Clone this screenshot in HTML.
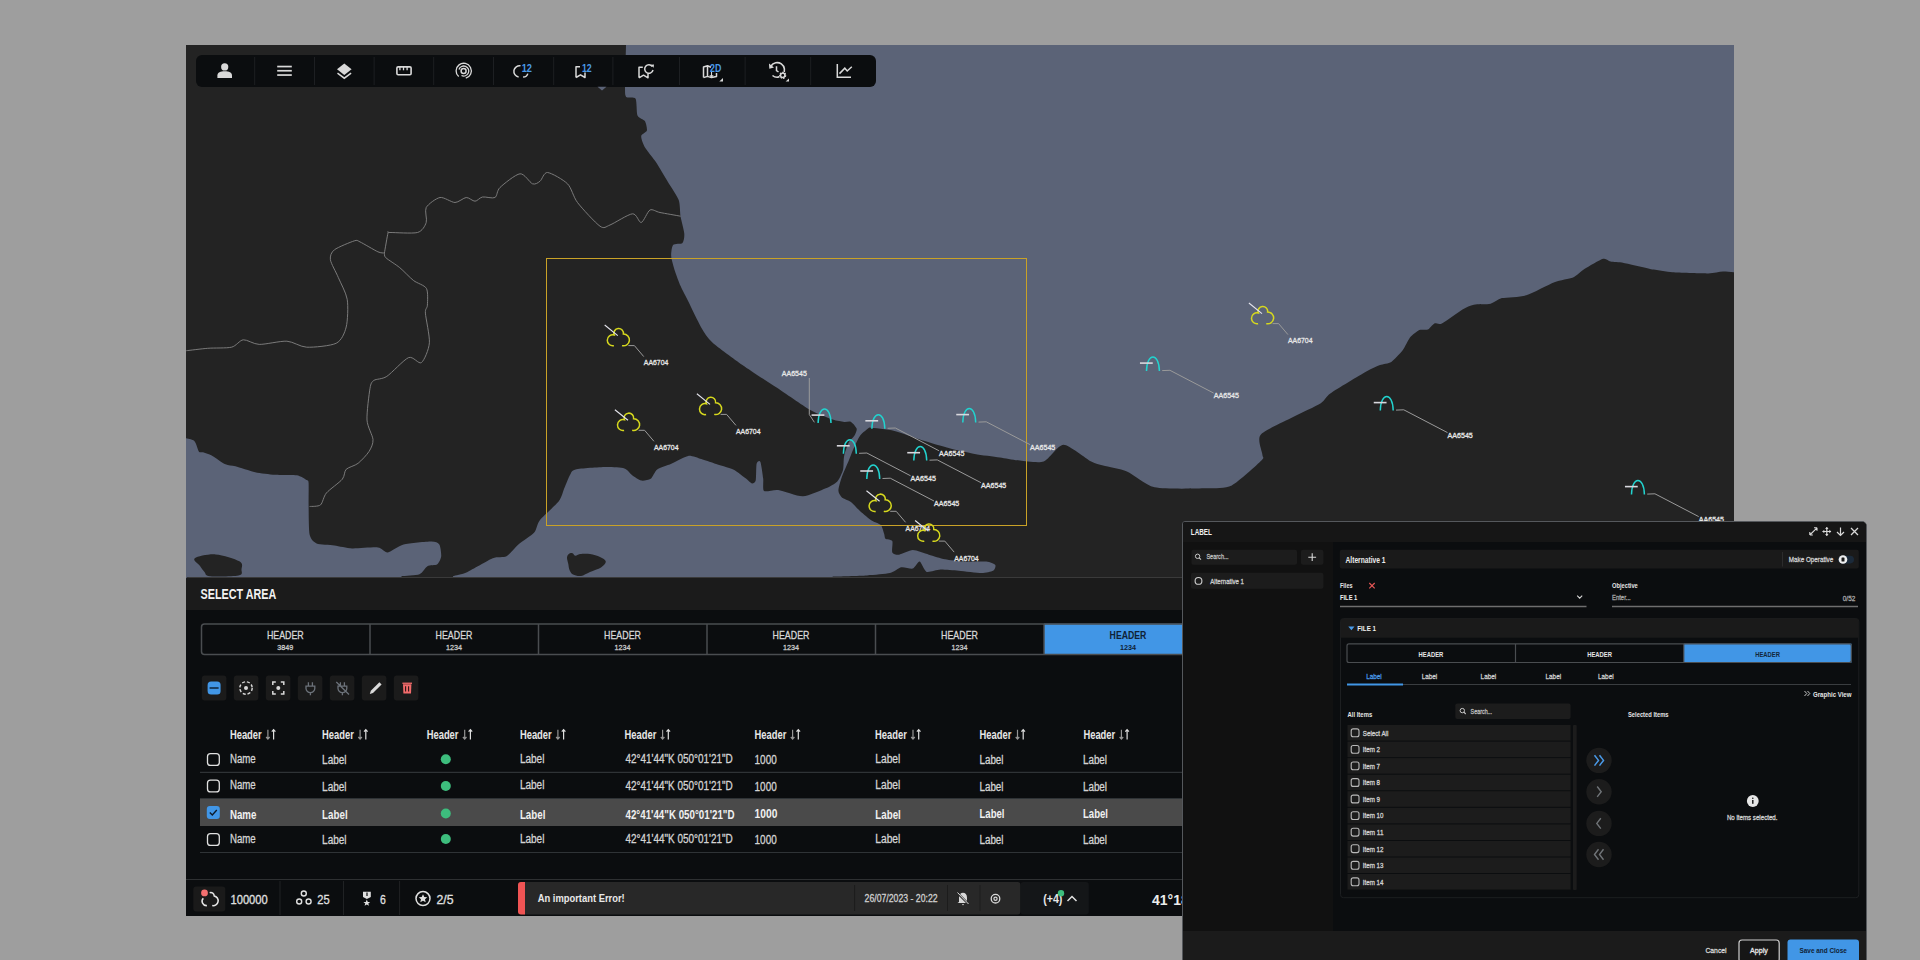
<!DOCTYPE html>
<html><head><meta charset="utf-8">
<style>
*{box-sizing:border-box;margin:0;padding:0}
html,body{width:1920px;height:960px;overflow:hidden;background:#9e9e9e;font-family:"Liberation Sans",sans-serif;position:relative}
svg{position:absolute;left:0;top:0;overflow:hidden}
text{font-family:"Liberation Sans",sans-serif}
</style></head><body>
<svg width="1920" height="960" viewBox="0 0 1920 960" style="position:absolute;left:0;top:0">
<defs><clipPath id="mc"><rect x="186" y="45" width="1548" height="535"/></clipPath></defs>
<g clip-path="url(#mc)">
<rect x="186" y="45" width="1548" height="535" fill="#5b6377"/>
<path fill="#232323" d="M180.0,40.0 L626.0,40.0 L626.0,45.0 C625.9,49.9 625.0,80.9 625.0,87.0 C625.0,93.1 625.0,95.5 626.2,96.9 C627.4,98.3 634.3,96.5 635.6,98.7 C636.9,100.9 636.4,113.0 637.5,115.6 C638.6,118.2 643.9,119.5 645.0,121.2 C646.1,123.0 647.3,128.8 646.9,130.6 C646.5,132.3 641.4,134.2 641.2,136.2 C641.0,138.2 643.2,144.4 645.0,147.5 C646.8,150.6 653.6,158.6 656.2,162.5 C658.8,166.4 664.9,176.8 667.5,181.2 C670.1,185.6 677.2,195.8 678.7,200.0 C680.2,204.2 679.9,212.9 680.6,216.8 C681.3,220.7 684.1,230.6 684.3,233.7 C684.5,236.8 683.8,241.7 682.5,243.0 C681.2,244.3 674.4,243.4 673.1,244.9 C671.8,246.4 671.0,253.1 671.2,256.2 C671.4,259.3 673.9,267.7 675.0,271.2 C676.1,274.7 679.1,282.6 680.6,286.1 C682.1,289.6 685.7,296.3 688.1,301.1 C690.5,305.9 698.4,322.6 701.2,327.4 C704.0,332.2 707.6,338.0 712.4,342.4 C717.2,346.8 735.0,359.7 742.4,364.9 C749.8,370.1 768.3,382.1 776.2,387.3 C784.1,392.5 803.3,406.0 809.9,409.8 C816.5,413.6 828.7,418.2 832.7,419.6 C836.7,421.0 842.0,421.6 844.1,421.9 C846.2,422.2 849.5,421.1 851.0,421.9 C852.5,422.7 856.3,427.1 856.7,428.7 C857.1,430.3 855.4,434.0 854.5,435.6 C853.6,437.2 849.9,440.1 848.7,442.5 C847.5,444.9 844.8,453.0 844.1,456.2 C843.4,459.4 843.8,467.1 843.0,470.0 C842.2,472.9 839.3,479.3 837.3,481.4 C835.3,483.5 829.8,486.6 825.8,488.3 C821.8,490.0 808.5,496.1 802.9,496.3 C797.3,496.5 782.7,490.6 778.2,490.0 C773.7,489.4 765.9,492.3 764.1,491.0 C762.4,489.7 763.6,482.2 763.2,478.8 C762.8,475.4 761.2,463.6 760.4,461.9 C759.6,460.1 757.1,461.6 756.6,463.8 C756.1,466.0 756.2,478.3 755.7,480.6 C755.2,482.9 753.0,483.7 751.9,483.5 C750.8,483.3 748.5,480.4 746.3,478.8 C744.1,477.2 736.9,471.2 733.2,469.4 C729.5,467.6 718.1,464.6 714.4,463.4 C710.7,462.2 704.4,460.0 701.3,459.1 C698.2,458.2 691.7,455.4 688.2,455.9 C684.7,456.4 674.9,462.2 671.3,463.8 C667.7,465.4 659.6,467.6 657.2,469.4 C654.8,471.1 652.6,477.5 650.7,478.8 C648.8,480.1 643.5,481.0 641.3,480.6 C639.1,480.2 633.9,476.4 631.9,475.0 C629.9,473.6 627.5,469.4 624.4,468.5 C621.3,467.6 611.3,467.0 605.6,467.1 C599.9,467.2 579.8,468.5 575.6,469.4 C571.4,470.3 571.3,472.8 570.0,475.0 C568.7,477.2 565.7,485.0 564.4,488.1 C563.1,491.2 561.6,497.6 558.8,501.3 C556.0,505.0 542.9,516.3 540.0,520.0 C537.1,523.7 536.7,529.7 534.2,532.6 C531.7,535.5 521.6,541.7 518.4,544.5 C515.2,547.3 509.5,554.7 506.5,556.3 C503.5,557.9 497.3,556.4 492.7,558.3 C488.1,560.2 471.6,570.1 467.0,572.2 C462.4,574.3 454.7,575.6 453.1,576.1 L453.0,582.0 L401.0,582.0 L401.6,576.1 C403.7,575.9 416.5,575.4 419.5,574.2 C422.5,573.0 425.3,567.4 427.4,566.2 C429.5,565.0 435.7,565.5 437.3,564.3 C438.9,563.1 441.0,558.6 441.2,556.3 C441.4,554.0 440.5,546.2 439.3,544.5 C438.1,542.8 435.5,541.5 431.3,541.5 C427.1,541.5 408.7,543.2 403.6,544.5 C398.5,545.8 390.8,552.1 387.8,552.4 C384.8,552.7 382.1,547.9 377.9,547.4 C373.7,546.9 357.3,548.6 352.2,548.4 C347.1,548.2 338.6,546.1 334.4,545.5 C330.2,544.9 319.5,544.8 316.6,543.5 C313.7,542.2 310.5,539.1 309.6,534.6 C308.7,530.1 308.7,510.9 308.6,504.9 C308.5,498.9 308.8,486.0 308.6,483.1 C308.4,480.2 308.1,481.0 306.7,480.1 C305.3,479.2 300.5,475.8 296.8,475.2 C293.1,474.6 279.9,475.2 275.0,474.8 C270.1,474.4 259.8,473.2 255.2,472.2 C250.6,471.2 238.9,467.2 235.4,466.3 C231.9,465.4 228.3,465.6 225.5,464.3 C222.7,463.0 214.2,456.8 211.7,455.4 C209.2,454.0 205.2,452.9 203.7,452.4 C202.2,451.9 199.9,452.9 198.8,451.5 C197.7,450.1 196.1,442.3 193.9,440.6 C191.7,438.9 181.6,437.4 180.0,437.0 Z"/>
<path fill="#232323" d="M869.3,427.6 C872.2,428.0 888.4,429.5 894.5,431.0 C900.6,432.5 915.6,438.2 922.0,440.2 C928.4,442.2 943.4,446.6 949.5,448.2 C955.6,449.8 968.8,452.8 974.7,453.9 C980.6,455.0 994.6,456.6 999.9,457.4 C1005.2,458.2 1014.9,460.1 1020.0,460.6 C1025.1,461.1 1038.6,463.4 1043.7,461.6 C1048.8,459.8 1058.0,444.8 1063.5,444.8 C1069.0,444.8 1086.6,459.2 1091.2,461.6 C1095.8,464.0 1098.9,464.4 1103.1,465.6 C1107.3,466.8 1120.9,469.0 1126.9,471.5 C1132.9,474.0 1145.4,485.3 1154.6,487.3 C1163.8,489.3 1197.0,488.5 1206.0,488.3 C1215.0,488.1 1225.3,488.6 1231.8,485.4 C1238.3,482.2 1257.8,464.2 1261.4,460.6 C1265.0,457.0 1262.5,457.7 1262.4,454.7 C1262.3,451.7 1256.9,439.3 1260.5,434.9 C1264.1,430.5 1286.1,420.8 1293.1,417.1 C1300.1,413.4 1316.4,406.0 1320.8,403.2 C1325.2,400.4 1325.4,397.0 1330.7,393.3 C1336.0,389.6 1360.5,374.9 1366.3,371.6 C1372.1,368.3 1377.1,366.1 1380.0,365.0 C1382.9,363.9 1388.7,363.6 1391.3,361.9 C1393.9,360.2 1400.3,353.4 1402.5,350.6 C1404.7,347.8 1408.0,339.9 1410.0,337.5 C1412.0,335.1 1417.3,330.9 1419.4,330.0 C1421.5,329.1 1426.0,330.4 1427.8,329.6 C1429.5,328.8 1432.8,324.1 1434.4,323.4 C1436.0,322.7 1438.6,325.0 1441.9,323.4 C1445.2,321.8 1458.8,311.6 1462.5,309.4 C1466.2,307.2 1470.5,305.4 1473.8,304.7 C1477.1,304.0 1487.3,304.6 1490.6,303.8 C1493.9,303.0 1497.7,299.1 1501.9,298.1 C1506.1,297.1 1520.2,297.2 1526.3,295.3 C1532.4,293.4 1548.9,284.3 1554.4,282.2 C1559.9,280.1 1569.6,279.0 1573.1,277.5 C1576.6,276.0 1580.9,271.3 1584.4,269.1 C1587.9,266.9 1600.0,259.7 1603.1,258.8 C1606.2,257.9 1608.2,261.1 1610.6,261.6 C1613.0,262.1 1618.8,262.0 1623.8,262.9 C1628.8,263.8 1648.1,268.5 1653.8,269.6 C1659.5,270.7 1666.2,271.9 1672.5,272.3 C1678.8,272.7 1702.2,273.5 1708.1,273.4 C1714.0,273.3 1719.4,271.6 1723.1,271.5 C1726.8,271.4 1738.0,272.6 1740.0,272.8 L1740.0,582.0 L832.0,582.0 L832.7,576.5 C836.7,576.4 860.3,575.8 867.0,575.4 C873.7,575.0 886.0,574.0 890.0,573.1 C894.0,572.2 898.7,567.8 901.4,567.3 C904.1,566.8 910.8,569.2 912.9,568.5 C915.0,567.8 918.1,561.2 919.7,561.6 C921.3,562.0 924.2,571.0 926.6,571.9 C929.0,572.8 936.7,569.7 940.4,569.6 C944.1,569.5 953.9,570.4 958.7,570.8 C963.5,571.2 977.6,573.1 981.6,573.1 C985.6,573.1 991.5,571.7 993.1,570.8 C994.7,569.9 996.1,566.1 995.3,565.0 C994.5,563.9 989.9,562.0 986.2,561.6 C982.5,561.2 968.1,561.9 963.3,561.6 C958.5,561.3 949.0,560.1 945.0,559.3 C941.0,558.5 932.6,555.8 928.9,554.7 C925.2,553.6 916.4,550.1 912.9,550.1 C909.4,550.1 901.5,554.4 899.1,554.7 C896.7,555.0 893.1,554.0 892.3,552.4 C891.5,550.8 893.1,542.6 892.3,541.0 C891.5,539.4 886.3,539.5 885.4,538.7 C884.5,537.9 884.7,535.7 884.2,534.1 C883.7,532.5 882.3,526.6 880.8,525.0 C879.3,523.4 874.0,522.0 871.6,520.4 C869.2,518.8 862.6,513.3 860.2,511.2 C857.8,509.1 853.1,503.6 851.0,502.0 C848.9,500.4 843.4,498.8 841.9,497.5 C840.4,496.2 838.4,493.0 838.4,490.6 C838.4,488.2 840.7,480.3 841.9,476.8 C843.1,473.3 847.4,464.0 848.7,460.8 C850.0,457.6 852.0,452.2 853.3,449.3 C854.6,446.4 858.3,438.1 860.2,435.6 C862.1,433.1 868.2,428.5 869.3,427.6 Z"/>
<path fill="#232323" d="M194.8,558.3 C197.4,556.4 208.2,553.9 215.6,554.4 C223.0,554.9 235.1,558.8 239.4,561.3 C243.7,563.8 241.7,567.1 241.5,569.5 C241.3,571.9 243.8,574.5 238.5,575.6 C233.2,576.7 215.7,576.8 210.0,576.2 C204.3,575.6 206.2,573.7 204.5,572.0 C202.8,570.3 201.6,568.3 200.0,566.0 C198.4,563.7 192.2,560.2 194.8,558.3 Z"/>
<path fill="#232323" d="M567.0,558.0 C567.0,556.4 567.6,555.0 568.5,554.2 C569.4,553.4 571.3,552.9 572.5,553.2 C573.7,553.5 574.2,555.7 575.5,555.8 C576.8,555.9 577.6,554.3 580.0,554.0 C582.4,553.7 586.7,553.5 590.0,554.0 C593.3,554.5 597.4,555.8 600.0,557.0 C602.6,558.2 605.6,559.8 605.8,561.5 C606.0,563.2 603.6,565.8 601.0,567.5 C598.4,569.2 593.3,570.6 590.0,572.0 C586.7,573.4 583.8,575.6 581.0,576.0 C578.2,576.4 574.9,575.5 573.0,574.5 C571.1,573.5 570.3,571.8 569.5,570.0 C568.7,568.2 568.7,566.0 568.3,564.0 C567.9,562.0 567.0,559.6 567.0,558.0 Z"/>
<g fill="none" stroke="#7e7e7e" stroke-width="0.95" stroke-linejoin="round">
<path d="M186.3,350.7 C189.2,350.4 201.7,348.8 207.7,348.3 C213.7,347.8 226.8,348.3 231.5,347.2 C236.2,346.1 239.6,340.2 243.3,339.8 C247.0,339.4 253.4,344.2 259.2,344.4 C265.0,344.6 280.6,340.8 286.9,341.2 C293.2,341.6 300.1,346.9 306.7,347.2 C313.3,347.5 331.0,345.9 336.3,343.2 C341.6,340.5 344.7,332.9 346.2,327.0 C347.7,321.1 348.3,305.9 347.2,299.3 C346.1,292.7 340.5,282.8 338.3,277.5 C336.1,272.2 330.9,263.4 330.4,259.7 C329.9,256.0 331.2,252.3 334.4,249.8 C337.6,247.3 350.8,242.0 354.2,240.9 C357.6,239.8 356.8,240.4 360.0,241.9 C363.2,243.4 374.6,250.3 377.9,251.8 C381.2,253.3 383.5,252.8 384.4,253.0"/>
<path d="M384.4,253.0 C384.9,250.3 387.3,235.7 388.0,233.0 C388.7,230.3 386.1,232.6 390.0,232.5 C393.9,232.4 412.7,233.8 417.5,232.5 C422.3,231.2 425.1,225.8 426.2,222.5 C427.4,219.2 424.4,210.8 426.2,207.5 C428.1,204.2 436.2,198.2 440.0,197.5 C443.8,196.8 451.5,202.5 455.0,202.5 C458.5,202.5 463.6,197.7 466.2,197.5 C468.9,197.3 472.8,201.3 475.0,201.2 C477.2,201.2 479.8,197.5 482.5,197.0 C485.2,196.5 492.7,198.8 495.0,197.5 C497.3,196.2 496.7,190.7 500.0,187.5 C503.3,184.3 515.7,174.2 520.0,173.8 C524.3,173.2 529.8,182.8 532.5,183.8 C535.2,184.8 538.0,182.8 540.0,181.2 C542.0,179.8 543.8,172.2 547.5,172.5 C551.2,172.8 563.5,179.8 567.5,183.8 C571.5,187.8 573.2,196.8 577.5,202.5 C581.8,208.2 595.7,223.2 600.0,226.2 C604.3,229.2 605.7,226.7 610.0,225.0 C614.3,223.3 628.3,214.1 632.5,213.8 C636.7,213.4 638.9,223.0 641.2,222.5 C643.6,222.0 647.5,211.3 650.0,210.0 C652.5,208.7 655.9,211.7 660.0,212.5 C664.1,213.3 677.9,215.7 680.6,216.2"/>
<path d="M384.4,253.0 C384.6,253.6 383.8,255.8 385.8,257.7 C387.8,259.6 396.0,264.6 399.7,267.6 C403.4,270.6 409.9,277.7 413.5,280.5 C417.1,283.3 424.5,285.1 426.4,288.4 C428.3,291.7 427.5,301.9 427.4,305.2 C427.3,308.5 425.1,308.1 425.4,313.1 C425.7,318.1 429.9,336.2 429.4,342.8 C428.9,349.4 424.2,360.6 421.4,362.6 C418.6,364.6 413.2,355.8 408.6,357.6 C404.0,359.4 391.4,373.4 386.8,376.4 C382.2,379.4 376.1,378.8 373.9,380.4 C371.7,382.0 370.9,383.0 370.0,388.3 C369.1,393.6 366.6,413.2 367.0,420.0 C367.4,426.8 372.7,435.4 373.0,439.6 C373.3,443.8 371.0,448.3 369.0,451.5 C367.0,454.7 361.1,460.9 358.1,463.3 C355.1,465.7 348.3,467.2 346.2,469.3 C344.1,471.4 344.9,476.0 342.3,479.2 C339.7,482.4 329.3,489.6 326.4,493.0 C323.5,496.4 322.7,503.1 320.5,504.9 C318.3,506.7 311.1,506.3 309.6,506.5"/>
</g>
<rect x="546.5" y="258.5" width="480" height="267" fill="none" stroke="#c9a227" stroke-width="1"/>
<g font-family="Liberation Sans">
<g transform="translate(608.0,328.0)"><path d="M5.9,17.7 A5.5,5.5 0 1 1 6.2,7.0 A4.8,4.8 0 1 1 15.4,6.0 A5.9,5.9 0 1 1 14.0,17.6" fill="none" stroke="#d6d81e" stroke-width="1.5"/><line x1="-3.3" y1="-3" x2="9.8" y2="7.6" stroke="#e6e6ee" stroke-width="1.1"/><polyline points="20.4,17.6 26.4,17.6 35.75,28.6" fill="none" stroke="#9a9a9a" stroke-width="1"/><text x="35.8" y="37.0" font-size="8" fill="#e8e8e8" textLength="24.5" lengthAdjust="spacingAndGlyphs" stroke="#e8e8e8" stroke-width="0.3">AA6704</text></g>
<g transform="translate(618.2,412.7)"><path d="M5.9,17.7 A5.5,5.5 0 1 1 6.2,7.0 A4.8,4.8 0 1 1 15.4,6.0 A5.9,5.9 0 1 1 14.0,17.6" fill="none" stroke="#d6d81e" stroke-width="1.5"/><line x1="-3.3" y1="-3" x2="9.8" y2="7.6" stroke="#e6e6ee" stroke-width="1.1"/><polyline points="20.4,17.6 26.4,17.6 35.75,28.6" fill="none" stroke="#9a9a9a" stroke-width="1"/><text x="35.8" y="37.0" font-size="8" fill="#e8e8e8" textLength="24.5" lengthAdjust="spacingAndGlyphs" stroke="#e8e8e8" stroke-width="0.3">AA6704</text></g>
<g transform="translate(700.2,396.8)"><path d="M5.9,17.7 A5.5,5.5 0 1 1 6.2,7.0 A4.8,4.8 0 1 1 15.4,6.0 A5.9,5.9 0 1 1 14.0,17.6" fill="none" stroke="#d6d81e" stroke-width="1.5"/><line x1="-3.3" y1="-3" x2="9.8" y2="7.6" stroke="#e6e6ee" stroke-width="1.1"/><polyline points="20.4,17.6 26.4,17.6 35.75,28.6" fill="none" stroke="#9a9a9a" stroke-width="1"/><text x="35.8" y="37.0" font-size="8" fill="#e8e8e8" textLength="24.5" lengthAdjust="spacingAndGlyphs" stroke="#e8e8e8" stroke-width="0.3">AA6704</text></g>
<g transform="translate(869.8,493.7)"><path d="M5.9,17.7 A5.5,5.5 0 1 1 6.2,7.0 A4.8,4.8 0 1 1 15.4,6.0 A5.9,5.9 0 1 1 14.0,17.6" fill="none" stroke="#d6d81e" stroke-width="1.5"/><line x1="-3.3" y1="-3" x2="9.8" y2="7.6" stroke="#e6e6ee" stroke-width="1.1"/><polyline points="20.4,17.6 26.4,17.6 35.75,28.6" fill="none" stroke="#9a9a9a" stroke-width="1"/><text x="35.8" y="37.0" font-size="8" fill="#e8e8e8" textLength="24.5" lengthAdjust="spacingAndGlyphs" stroke="#e8e8e8" stroke-width="0.3">AA6704</text></g>
<g transform="translate(918.4,523.5)"><path d="M5.9,17.7 A5.5,5.5 0 1 1 6.2,7.0 A4.8,4.8 0 1 1 15.4,6.0 A5.9,5.9 0 1 1 14.0,17.6" fill="none" stroke="#d6d81e" stroke-width="1.5"/><line x1="-3.3" y1="-3" x2="9.8" y2="7.6" stroke="#e6e6ee" stroke-width="1.1"/><polyline points="20.4,17.6 26.4,17.6 35.75,28.6" fill="none" stroke="#9a9a9a" stroke-width="1"/><text x="35.8" y="37.0" font-size="8" fill="#e8e8e8" textLength="24.5" lengthAdjust="spacingAndGlyphs" stroke="#e8e8e8" stroke-width="0.3">AA6704</text></g>
<g transform="translate(1252.2,306.0)"><path d="M5.9,17.7 A5.5,5.5 0 1 1 6.2,7.0 A4.8,4.8 0 1 1 15.4,6.0 A5.9,5.9 0 1 1 14.0,17.6" fill="none" stroke="#d6d81e" stroke-width="1.5"/><line x1="-3.3" y1="-3" x2="9.8" y2="7.6" stroke="#e6e6ee" stroke-width="1.1"/><polyline points="20.4,17.6 26.4,17.6 35.75,28.6" fill="none" stroke="#9a9a9a" stroke-width="1"/><text x="35.8" y="37.0" font-size="8" fill="#e8e8e8" textLength="24.5" lengthAdjust="spacingAndGlyphs" stroke="#e8e8e8" stroke-width="0.3">AA6704</text></g>
<g transform="translate(1146.2,355.0)"><path d="M0.3,16 C0.6,-2.7 12.9,-2.7 13.2,16" fill="none" stroke="#22d3cf" stroke-width="1.5"/><line x1="-6.25" y1="8.1" x2="6.55" y2="8.1" stroke="#d8d8de" stroke-width="1.6"/><polyline points="16,15.6 23.75,15.3 67.5,38.1" fill="none" stroke="#9a9a9a" stroke-width="1"/><text x="67.5" y="43.0" font-size="8" fill="#e8e8e8" textLength="25.3" lengthAdjust="spacingAndGlyphs" stroke="#e8e8e8" stroke-width="0.3">AA6545</text></g>
<g transform="translate(871.6,412.7)"><path d="M0.3,16 C0.6,-2.7 12.9,-2.7 13.2,16" fill="none" stroke="#22d3cf" stroke-width="1.5"/><line x1="-6.25" y1="8.1" x2="6.55" y2="8.1" stroke="#d8d8de" stroke-width="1.6"/><polyline points="16,15.6 23.75,15.3 67.5,38.1" fill="none" stroke="#9a9a9a" stroke-width="1"/><text x="67.5" y="43.0" font-size="8" fill="#e8e8e8" textLength="25.3" lengthAdjust="spacingAndGlyphs" stroke="#e8e8e8" stroke-width="0.3">AA6545</text></g>
<g transform="translate(962.5,406.5)"><path d="M0.3,16 C0.6,-2.7 12.9,-2.7 13.2,16" fill="none" stroke="#22d3cf" stroke-width="1.5"/><line x1="-6.25" y1="8.1" x2="6.55" y2="8.1" stroke="#d8d8de" stroke-width="1.6"/><polyline points="16,15.6 23.75,15.3 67.5,38.1" fill="none" stroke="#9a9a9a" stroke-width="1"/><text x="67.5" y="43.0" font-size="8" fill="#e8e8e8" textLength="25.3" lengthAdjust="spacingAndGlyphs" stroke="#e8e8e8" stroke-width="0.3">AA6545</text></g>
<g transform="translate(843.1,437.7)"><path d="M0.3,16 C0.6,-2.7 12.9,-2.7 13.2,16" fill="none" stroke="#22d3cf" stroke-width="1.5"/><line x1="-6.25" y1="8.1" x2="6.55" y2="8.1" stroke="#d8d8de" stroke-width="1.6"/><polyline points="16,15.6 23.75,15.3 67.5,38.1" fill="none" stroke="#9a9a9a" stroke-width="1"/><text x="67.5" y="43.0" font-size="8" fill="#e8e8e8" textLength="25.3" lengthAdjust="spacingAndGlyphs" stroke="#e8e8e8" stroke-width="0.3">AA6545</text></g>
<g transform="translate(913.5,444.6)"><path d="M0.3,16 C0.6,-2.7 12.9,-2.7 13.2,16" fill="none" stroke="#22d3cf" stroke-width="1.5"/><line x1="-6.25" y1="8.1" x2="6.55" y2="8.1" stroke="#d8d8de" stroke-width="1.6"/><polyline points="16,15.6 23.75,15.3 67.5,38.1" fill="none" stroke="#9a9a9a" stroke-width="1"/><text x="67.5" y="43.0" font-size="8" fill="#e8e8e8" textLength="25.3" lengthAdjust="spacingAndGlyphs" stroke="#e8e8e8" stroke-width="0.3">AA6545</text></g>
<g transform="translate(866.5,462.9)"><path d="M0.3,16 C0.6,-2.7 12.9,-2.7 13.2,16" fill="none" stroke="#22d3cf" stroke-width="1.5"/><line x1="-6.25" y1="8.1" x2="6.55" y2="8.1" stroke="#d8d8de" stroke-width="1.6"/><polyline points="16,15.6 23.75,15.3 67.5,38.1" fill="none" stroke="#9a9a9a" stroke-width="1"/><text x="67.5" y="43.0" font-size="8" fill="#e8e8e8" textLength="25.3" lengthAdjust="spacingAndGlyphs" stroke="#e8e8e8" stroke-width="0.3">AA6545</text></g>
<g transform="translate(1380.0,394.5)"><path d="M0.3,16 C0.6,-2.7 12.9,-2.7 13.2,16" fill="none" stroke="#22d3cf" stroke-width="1.5"/><line x1="-6.25" y1="8.1" x2="6.55" y2="8.1" stroke="#d8d8de" stroke-width="1.6"/><polyline points="16,15.6 23.75,15.3 67.5,38.1" fill="none" stroke="#9a9a9a" stroke-width="1"/><text x="67.5" y="43.0" font-size="8" fill="#e8e8e8" textLength="25.3" lengthAdjust="spacingAndGlyphs" stroke="#e8e8e8" stroke-width="0.3">AA6545</text></g>
<g transform="translate(1631.2,478.5)"><path d="M0.3,16 C0.6,-2.7 12.9,-2.7 13.2,16" fill="none" stroke="#22d3cf" stroke-width="1.5"/><line x1="-6.25" y1="8.1" x2="6.55" y2="8.1" stroke="#d8d8de" stroke-width="1.6"/><polyline points="16,15.6 23.75,15.3 67.5,38.1" fill="none" stroke="#9a9a9a" stroke-width="1"/><text x="67.5" y="43.0" font-size="8" fill="#e8e8e8" textLength="25.3" lengthAdjust="spacingAndGlyphs" stroke="#e8e8e8" stroke-width="0.3">AA6545</text></g>
<g transform="translate(817.8,407.0)"><path d="M0.3,16 C0.6,-2.7 12.9,-2.7 13.2,16" fill="none" stroke="#22d3cf" stroke-width="1.5"/><line x1="-6.25" y1="8.1" x2="6.55" y2="8.1" stroke="#d8d8de" stroke-width="1.6"/></g>
<polyline points="809.3,378 809.3,414.5 814.4,422.3" fill="none" stroke="#9a9a9a" stroke-width="1"/>
<text x="781.8" y="375.6" font-size="8" fill="#e8e8e8" textLength="25.0" lengthAdjust="spacingAndGlyphs" stroke="#e8e8e8" stroke-width="0.3">AA6545</text>
</g>
</g></svg>
<div style="position:absolute;left:196px;top:55px;width:680px;height:31.5px;background:#0b0d0f;border-radius:6px"></div>
<svg width="1920" height="960" viewBox="0 0 1920 960" style="position:absolute;left:0;top:0" font-family="Liberation Sans">
<path d="M597.5,86.8 L606.5,86.8 L602,90.5 Z" fill="#5b6377"/>
<line x1="254.7" y1="57" x2="254.7" y2="85" stroke="#1d1f22" stroke-width="1"/>
<line x1="314.5" y1="57" x2="314.5" y2="85" stroke="#1d1f22" stroke-width="1"/>
<line x1="374.1" y1="57" x2="374.1" y2="85" stroke="#1d1f22" stroke-width="1"/>
<line x1="433.7" y1="57" x2="433.7" y2="85" stroke="#1d1f22" stroke-width="1"/>
<line x1="493.5" y1="57" x2="493.5" y2="85" stroke="#1d1f22" stroke-width="1"/>
<line x1="553.7" y1="57" x2="553.7" y2="85" stroke="#1d1f22" stroke-width="1"/>
<line x1="612.9" y1="57" x2="612.9" y2="85" stroke="#1d1f22" stroke-width="1"/>
<line x1="679.5" y1="57" x2="679.5" y2="85" stroke="#1d1f22" stroke-width="1"/>
<line x1="745.1" y1="57" x2="745.1" y2="85" stroke="#1d1f22" stroke-width="1"/>
<line x1="810.7" y1="57" x2="810.7" y2="85" stroke="#1d1f22" stroke-width="1"/>
<circle cx="224.7" cy="66.9" r="3.6" fill="#d9d9d9"/>
<path d="M217.4,77.9 L217.4,75.5 C217.4,72.6 220.5,71.3 224.7,71.3 C228.9,71.3 232,72.6 232,75.5 L232,77.9 Z" fill="#d9d9d9"/>
<rect x="277.2" y="65.7" width="14.6" height="1.7" fill="#d9d9d9"/>
<rect x="277.2" y="69.9" width="14.6" height="1.7" fill="#d9d9d9"/>
<rect x="277.2" y="74.2" width="14.6" height="1.7" fill="#d9d9d9"/>
<path d="M344.3,63.6 L351.6,69.3 L344.3,75 L337,69.3 Z" fill="#d9d9d9"/>
<path d="M337.5,73.2 L344.3,78.2 L351.1,73.2" fill="none" stroke="#d9d9d9" stroke-width="1.5"/>
<rect x="396.9" y="66.9" width="14.2" height="7.8" rx="1.2" fill="none" stroke="#d9d9d9" stroke-width="1.6"/>
<line x1="399.9" y1="66.9" x2="399.9" y2="70.3" stroke="#d9d9d9" stroke-width="1.3"/>
<line x1="403.5" y1="66.9" x2="403.5" y2="70.3" stroke="#d9d9d9" stroke-width="1.3"/>
<line x1="407.1" y1="66.9" x2="407.1" y2="70.3" stroke="#d9d9d9" stroke-width="1.3"/>
<circle cx="463.6" cy="70.9" r="2.5" fill="none" stroke="#d9d9d9" stroke-width="1.5"/>
<path d="M459,69.5 A5,5 0 1 1 461.5,75.5" fill="none" stroke="#d9d9d9" stroke-width="1.3"/>
<path d="M458.7,76.6 A7.6,7.6 0 1 1 465.8,78.2" fill="none" stroke="#d9d9d9" stroke-width="1.3"/>
<path d="M518.6,77 A4.6,4.6 0 0 1 520.5,65.8" fill="none" stroke="#d9d9d9" stroke-width="1.5"/>
<path d="M523.1,77 A4.8,4.8 0 0 0 527.8,73.6" fill="none" stroke="#d9d9d9" stroke-width="1.5"/>
<text x="521.7" y="71.8" font-size="10.5" fill="#4a9ae8" textLength="10.3" lengthAdjust="spacingAndGlyphs" font-weight="bold">12</text>
<path d="M576,77.5 L576,66.8 L580,66.8 M585,72.5 L585,77.5 L580.5,74.8 L576,77.5" fill="none" stroke="#d9d9d9" stroke-width="1.5" stroke-linejoin="round"/>
<text x="581.9" y="71.8" font-size="10.5" fill="#4a9ae8" textLength="9.8" lengthAdjust="spacingAndGlyphs" font-weight="bold">12</text>
<path d="M639,77.8 L639,67.3 L642.8,67.3 M648,74 L648,77.8 L643.5,75.2 L639,77.8" fill="none" stroke="#d9d9d9" stroke-width="1.5" stroke-linejoin="round"/>
<path d="M652.3,66.6 A4.2,4.2 0 1 0 653,70" fill="none" stroke="#d9d9d9" stroke-width="1.5"/>
<path d="M650.8,64.8 L654,64.5 L653.6,67.8 Z" fill="#d9d9d9"/>
<path d="M703.5,77.6 L703.5,67 L707.5,65.8 L711,67.2 M707.5,65.8 L707.5,76.4 M703.5,77.6 L707.5,76.4 L711.5,77.6 L716.5,76.4 L716.5,73" fill="none" stroke="#d9d9d9" stroke-width="1.5" stroke-linejoin="round"/>
<path d="M711.5,72 L711.5,77 M709.8,75.3 L711.5,77 L713.2,75.3" fill="none" stroke="#d9d9d9" stroke-width="1.1"/>
<text x="710.0" y="71.8" font-size="10.5" fill="#4a9ae8" textLength="11.3" lengthAdjust="spacingAndGlyphs" font-weight="bold">2D</text>
<path d="M723,77.9 L723,81.6 L719.3,81.6 Z" fill="#d9d9d9"/>
<path d="M771,66 A7.3,7.3 0 1 1 772.5,75.5" fill="none" stroke="#d9d9d9" stroke-width="1.6"/>
<path d="M769,63.5 L769.3,68.8 L774,67.6 Z" fill="#d9d9d9"/>
<path d="M776.5,66.3 L776.5,70.5 L778.5,72" fill="none" stroke="#d9d9d9" stroke-width="1.5"/>
<circle cx="782.7" cy="75.3" r="3.6" fill="#0b0d0f"/>
<circle cx="782.7" cy="75.3" r="2.6" fill="none" stroke="#d9d9d9" stroke-width="2" stroke-dasharray="1.4 0.9"/>
<circle cx="782.7" cy="75.3" r="2.2" fill="none" stroke="#d9d9d9" stroke-width="1.3"/>
<path d="M789,78.4 L789,81.6 L785.6,81.6 Z" fill="#d9d9d9"/>
<path d="M837.3,64 L837.3,77.3 L851,77.3" fill="none" stroke="#d9d9d9" stroke-width="1.5"/>
<path d="M839.5,73.6 L844.8,68.2 L847.2,71 L851.8,66.8" fill="none" stroke="#d9d9d9" stroke-width="1.5"/>
</svg>
<div style="position:absolute;left:186px;top:577px;width:1000px;height:303px;background:#0b0d0f;border-radius:3px 0 0 0;overflow:hidden"><div style="position:absolute;left:0;top:0;width:1000px;height:1px;background:#3a3a3a"></div><div style="position:absolute;left:0;top:1px;width:1000px;height:32px;background:#1b1b1b"></div></div>
<div style="position:absolute;left:186px;top:879px;width:1000px;height:37px;background:#0b0d0f;border-top:1px solid #2e3032"></div>
<svg width="1920" height="960" viewBox="0 0 1920 960" style="position:absolute;left:0;top:0" font-family="Liberation Sans">
<text x="200.6" y="599.4" font-size="14" fill="#f2f2f2" textLength="75.6" lengthAdjust="spacingAndGlyphs" font-weight="bold">SELECT AREA</text>
<rect x="1044" y="623.6" width="170" height="31.3" fill="#4196e6"/>
<rect x="201.5" y="623.9" width="1012" height="30.7" rx="3" fill="none" stroke="#4a4d50" stroke-width="1.5"/>
<line x1="370.0" y1="624" x2="370.0" y2="654.5" stroke="#4a4d50" stroke-width="1.5"/>
<line x1="538.5" y1="624" x2="538.5" y2="654.5" stroke="#4a4d50" stroke-width="1.5"/>
<line x1="707.0" y1="624" x2="707.0" y2="654.5" stroke="#4a4d50" stroke-width="1.5"/>
<line x1="875.5" y1="624" x2="875.5" y2="654.5" stroke="#4a4d50" stroke-width="1.5"/>
<line x1="1044.0" y1="624" x2="1044.0" y2="654.5" stroke="#4a4d50" stroke-width="1.5"/>
<text x="266.9" y="638.6" font-size="11" fill="#d8d8d8" textLength="36.8" lengthAdjust="spacingAndGlyphs" stroke="#d8d8d8" stroke-width="0.3">HEADER</text>
<text x="277.3" y="649.9" font-size="8" fill="#c8c8c8" textLength="16.0" lengthAdjust="spacingAndGlyphs" stroke="#c8c8c8" stroke-width="0.3">3849</text>
<text x="435.6" y="638.6" font-size="11" fill="#d8d8d8" textLength="36.8" lengthAdjust="spacingAndGlyphs" stroke="#d8d8d8" stroke-width="0.3">HEADER</text>
<text x="446.0" y="649.9" font-size="8" fill="#c8c8c8" textLength="16.0" lengthAdjust="spacingAndGlyphs" stroke="#c8c8c8" stroke-width="0.3">1234</text>
<text x="604.1" y="638.6" font-size="11" fill="#d8d8d8" textLength="36.8" lengthAdjust="spacingAndGlyphs" stroke="#d8d8d8" stroke-width="0.3">HEADER</text>
<text x="614.5" y="649.9" font-size="8" fill="#c8c8c8" textLength="16.0" lengthAdjust="spacingAndGlyphs" stroke="#c8c8c8" stroke-width="0.3">1234</text>
<text x="772.6" y="638.6" font-size="11" fill="#d8d8d8" textLength="36.8" lengthAdjust="spacingAndGlyphs" stroke="#d8d8d8" stroke-width="0.3">HEADER</text>
<text x="783.0" y="649.9" font-size="8" fill="#c8c8c8" textLength="16.0" lengthAdjust="spacingAndGlyphs" stroke="#c8c8c8" stroke-width="0.3">1234</text>
<text x="941.1" y="638.6" font-size="11" fill="#d8d8d8" textLength="36.8" lengthAdjust="spacingAndGlyphs" stroke="#d8d8d8" stroke-width="0.3">HEADER</text>
<text x="951.5" y="649.9" font-size="8" fill="#c8c8c8" textLength="16.0" lengthAdjust="spacingAndGlyphs" stroke="#c8c8c8" stroke-width="0.3">1234</text>
<text x="1109.6" y="638.6" font-size="11" fill="#0f2236" textLength="36.8" lengthAdjust="spacingAndGlyphs" font-weight="bold">HEADER</text>
<text x="1120.0" y="649.9" font-size="8" fill="#0f2236" textLength="16.0" lengthAdjust="spacingAndGlyphs" font-weight="bold">1234</text>
<rect x="201.8" y="675.5" width="24.6" height="25" rx="3" fill="#1b1b1b"/>
<rect x="233.8" y="675.5" width="24.6" height="25" rx="3" fill="#1b1b1b"/>
<rect x="265.8" y="675.5" width="24.6" height="25" rx="3" fill="#1b1b1b"/>
<rect x="297.8" y="675.5" width="24.6" height="25" rx="3" fill="#1b1b1b"/>
<rect x="329.8" y="675.5" width="24.6" height="25" rx="3" fill="#1b1b1b"/>
<rect x="361.8" y="675.5" width="24.6" height="25" rx="3" fill="#1b1b1b"/>
<rect x="393.8" y="675.5" width="24.6" height="25" rx="3" fill="#1b1b1b"/>
<rect x="207.6" y="681.5" width="13" height="13" rx="3.5" fill="#4196e6"/>
<line x1="209.6" y1="688" x2="218.6" y2="688" stroke="#0b1a2a" stroke-width="1.4"/>
<circle cx="246" cy="688" r="6.2" fill="none" stroke="#d9d9d9" stroke-width="1.4" stroke-dasharray="3 1.9"/>
<circle cx="246" cy="688" r="2" fill="#d9d9d9"/>
<path d="M272.8,685 L272.8,682 L275.8,682 M280.8,682 L283.8,682 L283.8,685 M283.8,691 L283.8,694 L280.8,694 M275.8,694 L272.8,694 L272.8,691" fill="none" stroke="#d9d9d9" stroke-width="1.5"/>
<circle cx="278.3" cy="688" r="2" fill="#d9d9d9"/>
<path d="M308.4,682.3 L308.4,686 M312.4,682.3 L312.4,686 M306,686.2 L314.8,686.2 L314.8,688.6 C314.8,690.8 312.6,692.6 310.4,692.6 C308.2,692.6 306,690.8 306,688.6 Z M310.4,692.6 L310.4,695.3" fill="none" stroke="#6c727a" stroke-width="1.3"/>
<path d="M340.4,682.3 L340.4,686 M344.4,682.3 L344.4,686 M338,686.2 L346.8,686.2 L346.8,688.6 C346.8,690.8 344.6,692.6 342.4,692.6 C340.2,692.6 338,690.8 338,688.6 Z M342.4,692.6 L342.4,695.3 M336.3,682 L349,694.5" fill="none" stroke="#6c727a" stroke-width="1.3"/>
<path d="M369.8,694 L370.8,690.8 L379.4,682.2 L381.6,684.4 L373,693 Z" fill="#d9d9d9"/>
<rect x="402.4" y="682.6" width="9.6" height="1.3" fill="#f26b6b"/>
<path d="M403,684.2 L411.4,684.2 L411,693.4 L403.4,693.4 Z" fill="#f26b6b"/>
<path d="M405.6,686.2 L405.6,691.6 M408.6,686.2 L408.6,691.6" stroke="#2a1515" stroke-width="1.1"/>
<text x="229.9" y="739.2" font-size="12" fill="#e6e6e6" textLength="31.8" lengthAdjust="spacingAndGlyphs" font-weight="bold">Header</text>
<path d="M267.9,729.8 L267.9,738.8 M266.1,737 L267.9,739 L269.7,737" fill="none" stroke="#959595" stroke-width="1.2"/>
<path d="M273.6,739.4 L273.6,729.8 M271.8,731.6 L273.6,729.6 L275.4,731.6" fill="none" stroke="#dedede" stroke-width="1.2"/>
<text x="322.1" y="739.2" font-size="12" fill="#e6e6e6" textLength="31.8" lengthAdjust="spacingAndGlyphs" font-weight="bold">Header</text>
<path d="M360.1,729.8 L360.1,738.8 M358.3,737 L360.1,739 L361.9,737" fill="none" stroke="#959595" stroke-width="1.2"/>
<path d="M365.8,739.4 L365.8,729.8 M364.0,731.6 L365.8,729.6 L367.6,731.6" fill="none" stroke="#dedede" stroke-width="1.2"/>
<text x="426.7" y="739.2" font-size="12" fill="#e6e6e6" textLength="31.8" lengthAdjust="spacingAndGlyphs" font-weight="bold">Header</text>
<path d="M464.7,729.8 L464.7,738.8 M462.9,737 L464.7,739 L466.5,737" fill="none" stroke="#959595" stroke-width="1.2"/>
<path d="M470.4,739.4 L470.4,729.8 M468.6,731.6 L470.4,729.6 L472.2,731.6" fill="none" stroke="#dedede" stroke-width="1.2"/>
<text x="519.9" y="739.2" font-size="12" fill="#e6e6e6" textLength="31.8" lengthAdjust="spacingAndGlyphs" font-weight="bold">Header</text>
<path d="M557.9,729.8 L557.9,738.8 M556.1,737 L557.9,739 L559.7,737" fill="none" stroke="#959595" stroke-width="1.2"/>
<path d="M563.6,739.4 L563.6,729.8 M561.8,731.6 L563.6,729.6 L565.4,731.6" fill="none" stroke="#dedede" stroke-width="1.2"/>
<text x="624.6" y="739.2" font-size="12" fill="#e6e6e6" textLength="31.8" lengthAdjust="spacingAndGlyphs" font-weight="bold">Header</text>
<path d="M662.6,729.8 L662.6,738.8 M660.8,737 L662.6,739 L664.4,737" fill="none" stroke="#959595" stroke-width="1.2"/>
<path d="M668.3,739.4 L668.3,729.8 M666.5,731.6 L668.3,729.6 L670.1,731.6" fill="none" stroke="#dedede" stroke-width="1.2"/>
<text x="754.6" y="739.2" font-size="12" fill="#e6e6e6" textLength="31.8" lengthAdjust="spacingAndGlyphs" font-weight="bold">Header</text>
<path d="M792.6,729.8 L792.6,738.8 M790.8,737 L792.6,739 L794.4,737" fill="none" stroke="#959595" stroke-width="1.2"/>
<path d="M798.3,739.4 L798.3,729.8 M796.5,731.6 L798.3,729.6 L800.1,731.6" fill="none" stroke="#dedede" stroke-width="1.2"/>
<text x="875.0" y="739.2" font-size="12" fill="#e6e6e6" textLength="31.8" lengthAdjust="spacingAndGlyphs" font-weight="bold">Header</text>
<path d="M913.0,729.8 L913.0,738.8 M911.2,737 L913.0,739 L914.8,737" fill="none" stroke="#959595" stroke-width="1.2"/>
<path d="M918.7,739.4 L918.7,729.8 M916.9,731.6 L918.7,729.6 L920.5,731.6" fill="none" stroke="#dedede" stroke-width="1.2"/>
<text x="979.5" y="739.2" font-size="12" fill="#e6e6e6" textLength="31.8" lengthAdjust="spacingAndGlyphs" font-weight="bold">Header</text>
<path d="M1017.5,729.8 L1017.5,738.8 M1015.7,737 L1017.5,739 L1019.3,737" fill="none" stroke="#959595" stroke-width="1.2"/>
<path d="M1023.2,739.4 L1023.2,729.8 M1021.4,731.6 L1023.2,729.6 L1025.0,731.6" fill="none" stroke="#dedede" stroke-width="1.2"/>
<text x="1083.4" y="739.2" font-size="12" fill="#e6e6e6" textLength="31.8" lengthAdjust="spacingAndGlyphs" font-weight="bold">Header</text>
<path d="M1121.4,729.8 L1121.4,738.8 M1119.6,737 L1121.4,739 L1123.2,737" fill="none" stroke="#959595" stroke-width="1.2"/>
<path d="M1127.1,739.4 L1127.1,729.8 M1125.3,731.6 L1127.1,729.6 L1128.9,731.6" fill="none" stroke="#dedede" stroke-width="1.2"/>
<rect x="200" y="799" width="990" height="27" fill="#4a4a4a"/>
<line x1="200" y1="772.3" x2="1190" y2="772.3" stroke="#2f3336" stroke-width="1.2"/>
<line x1="200" y1="852.5" x2="1190" y2="852.5" stroke="#2f3336" stroke-width="1.2"/>
<line x1="200" y1="798.5" x2="1190" y2="798.5" stroke="#2f3336" stroke-width="1"/>
<rect x="207.5" y="753.6" width="11.8" height="11.8" rx="3" fill="none" stroke="#e0e0e0" stroke-width="1.3"/>
<text x="229.9" y="762.5" font-size="12" fill="#d4d4d4" textLength="25.8" lengthAdjust="spacingAndGlyphs" stroke="#d4d4d4" stroke-width="0.3">Name</text>
<text x="322.1" y="764.3" font-size="12" fill="#d4d4d4" textLength="24.5" lengthAdjust="spacingAndGlyphs" stroke="#d4d4d4" stroke-width="0.3">Label</text>
<circle cx="445.8" cy="759.3" r="5" fill="#3dbd7d"/>
<text x="519.9" y="762.5" font-size="12" fill="#d4d4d4" textLength="24.5" lengthAdjust="spacingAndGlyphs" stroke="#d4d4d4" stroke-width="0.3">Label</text>
<text x="625.5" y="762.9" font-size="12" fill="#d4d4d4" textLength="107.3" lengthAdjust="spacingAndGlyphs" stroke="#d4d4d4" stroke-width="0.3">42°41'44"K 050°01'21"D</text>
<text x="754.6" y="763.8" font-size="12" fill="#d4d4d4" textLength="22.1" lengthAdjust="spacingAndGlyphs" stroke="#d4d4d4" stroke-width="0.3">1000</text>
<text x="875.3" y="762.5" font-size="12" fill="#d4d4d4" textLength="25.0" lengthAdjust="spacingAndGlyphs" stroke="#d4d4d4" stroke-width="0.3">Label</text>
<text x="979.5" y="763.8" font-size="12" fill="#d4d4d4" textLength="24.0" lengthAdjust="spacingAndGlyphs" stroke="#d4d4d4" stroke-width="0.3">Label</text>
<text x="1083.0" y="763.8" font-size="12" fill="#d4d4d4" textLength="24.0" lengthAdjust="spacingAndGlyphs" stroke="#d4d4d4" stroke-width="0.3">Label</text>
<rect x="207.5" y="780.1" width="11.8" height="11.8" rx="3" fill="none" stroke="#e0e0e0" stroke-width="1.3"/>
<text x="229.9" y="789.2" font-size="12" fill="#d4d4d4" textLength="25.8" lengthAdjust="spacingAndGlyphs" stroke="#d4d4d4" stroke-width="0.3">Name</text>
<text x="322.1" y="791.0" font-size="12" fill="#d4d4d4" textLength="24.5" lengthAdjust="spacingAndGlyphs" stroke="#d4d4d4" stroke-width="0.3">Label</text>
<circle cx="445.8" cy="786.0" r="5" fill="#3dbd7d"/>
<text x="519.9" y="789.2" font-size="12" fill="#d4d4d4" textLength="24.5" lengthAdjust="spacingAndGlyphs" stroke="#d4d4d4" stroke-width="0.3">Label</text>
<text x="625.5" y="789.6" font-size="12" fill="#d4d4d4" textLength="107.3" lengthAdjust="spacingAndGlyphs" stroke="#d4d4d4" stroke-width="0.3">42°41'44"K 050°01'21"D</text>
<text x="754.6" y="790.5" font-size="12" fill="#d4d4d4" textLength="22.1" lengthAdjust="spacingAndGlyphs" stroke="#d4d4d4" stroke-width="0.3">1000</text>
<text x="875.3" y="789.2" font-size="12" fill="#d4d4d4" textLength="25.0" lengthAdjust="spacingAndGlyphs" stroke="#d4d4d4" stroke-width="0.3">Label</text>
<text x="979.5" y="790.5" font-size="12" fill="#d4d4d4" textLength="24.0" lengthAdjust="spacingAndGlyphs" stroke="#d4d4d4" stroke-width="0.3">Label</text>
<text x="1083.0" y="790.5" font-size="12" fill="#d4d4d4" textLength="24.0" lengthAdjust="spacingAndGlyphs" stroke="#d4d4d4" stroke-width="0.3">Label</text>
<rect x="206.8" y="806.0" width="13" height="13" rx="3" fill="#4196e6"/>
<path d="M209.8,812.5 L212.3,815.0 L216.8,810.0" fill="none" stroke="#0b1a2a" stroke-width="1.4"/>
<text x="229.9" y="818.5" font-size="12" fill="#f0f0f0" textLength="26.5" lengthAdjust="spacingAndGlyphs" font-weight="bold">Name</text>
<text x="322.1" y="818.5" font-size="12" fill="#f0f0f0" textLength="25.5" lengthAdjust="spacingAndGlyphs" font-weight="bold">Label</text>
<circle cx="445.8" cy="813.5" r="5" fill="#3dbd7d"/>
<text x="519.9" y="818.5" font-size="12" fill="#f0f0f0" textLength="25.5" lengthAdjust="spacingAndGlyphs" font-weight="bold">Label</text>
<text x="625.5" y="818.9" font-size="12" fill="#f0f0f0" textLength="109.0" lengthAdjust="spacingAndGlyphs" font-weight="bold">42°41'44"K 050°01'21"D</text>
<text x="754.6" y="818.0" font-size="12" fill="#f0f0f0" textLength="22.8" lengthAdjust="spacingAndGlyphs" font-weight="bold">1000</text>
<text x="875.3" y="818.5" font-size="12" fill="#f0f0f0" textLength="25.5" lengthAdjust="spacingAndGlyphs" font-weight="bold">Label</text>
<text x="979.5" y="818.0" font-size="12" fill="#f0f0f0" textLength="25.0" lengthAdjust="spacingAndGlyphs" font-weight="bold">Label</text>
<text x="1083.0" y="818.0" font-size="12" fill="#f0f0f0" textLength="25.0" lengthAdjust="spacingAndGlyphs" font-weight="bold">Label</text>
<rect x="207.5" y="833.6" width="11.8" height="11.8" rx="3" fill="none" stroke="#e0e0e0" stroke-width="1.3"/>
<text x="229.9" y="842.5" font-size="12" fill="#d4d4d4" textLength="25.8" lengthAdjust="spacingAndGlyphs" stroke="#d4d4d4" stroke-width="0.3">Name</text>
<text x="322.1" y="844.0" font-size="12" fill="#d4d4d4" textLength="24.5" lengthAdjust="spacingAndGlyphs" stroke="#d4d4d4" stroke-width="0.3">Label</text>
<circle cx="445.8" cy="839.0" r="5" fill="#3dbd7d"/>
<text x="519.9" y="842.5" font-size="12" fill="#d4d4d4" textLength="24.5" lengthAdjust="spacingAndGlyphs" stroke="#d4d4d4" stroke-width="0.3">Label</text>
<text x="625.5" y="842.9" font-size="12" fill="#d4d4d4" textLength="107.3" lengthAdjust="spacingAndGlyphs" stroke="#d4d4d4" stroke-width="0.3">42°41'44"K 050°01'21"D</text>
<text x="754.6" y="843.5" font-size="12" fill="#d4d4d4" textLength="22.1" lengthAdjust="spacingAndGlyphs" stroke="#d4d4d4" stroke-width="0.3">1000</text>
<text x="875.3" y="842.5" font-size="12" fill="#d4d4d4" textLength="25.0" lengthAdjust="spacingAndGlyphs" stroke="#d4d4d4" stroke-width="0.3">Label</text>
<text x="979.5" y="843.5" font-size="12" fill="#d4d4d4" textLength="24.0" lengthAdjust="spacingAndGlyphs" stroke="#d4d4d4" stroke-width="0.3">Label</text>
<text x="1083.0" y="843.5" font-size="12" fill="#d4d4d4" textLength="24.0" lengthAdjust="spacingAndGlyphs" stroke="#d4d4d4" stroke-width="0.3">Label</text>
<rect x="193.3" y="886.4" width="32" height="25.1" rx="3" fill="#1a1a1a"/>
<path d="M206.9,905.6 A4.4,4.4 0 0 1 203.3,898.2 M209.7,892.8 A3.3,3.3 0 0 1 214.2,895.9 A4.9,4.9 0 0 1 212.2,905.6" fill="none" stroke="#e6e6e6" stroke-width="1.5"/>
<circle cx="204.5" cy="892.9" r="3.4" fill="#f47070"/>
<text x="230.5" y="904.2" font-size="13" fill="#e0e0e0" textLength="37.2" lengthAdjust="spacingAndGlyphs" stroke="#e0e0e0" stroke-width="0.3">100000</text>
<line x1="280.0" y1="881" x2="280.0" y2="915" stroke="#202224" stroke-width="1"/>
<line x1="343.5" y1="881" x2="343.5" y2="915" stroke="#202224" stroke-width="1"/>
<line x1="399.6" y1="881" x2="399.6" y2="915" stroke="#202224" stroke-width="1"/>
<g fill="none" stroke="#e0e0e0" stroke-width="1.4"><circle cx="303.8" cy="893.5" r="2.5"/><circle cx="299.2" cy="901.5" r="2.5"/><circle cx="308.6" cy="901.5" r="2.5"/></g>
<text x="317.3" y="904.2" font-size="13" fill="#e0e0e0" textLength="12.4" lengthAdjust="spacingAndGlyphs" stroke="#e0e0e0" stroke-width="0.3">25</text>
<path d="M363,891.8 L370.8,891.8 L370.8,897 L366.9,899 L363,897 Z" fill="#e0e0e0"/>
<line x1="367" y1="892.5" x2="367" y2="896" stroke="#0b0d0f" stroke-width="1.2"/>
<path d="M366.8,899.6 L367.8,901.9 L370.2,902 L368.3,903.5 L369,905.8 L366.8,904.5 L364.6,905.8 L365.3,903.5 L363.4,902 L365.8,901.9 Z" fill="#e0e0e0"/>
<text x="380.0" y="904.2" font-size="13" fill="#e0e0e0" textLength="5.8" lengthAdjust="spacingAndGlyphs" stroke="#e0e0e0" stroke-width="0.3">6</text>
<circle cx="423" cy="898.6" r="7" fill="none" stroke="#e0e0e0" stroke-width="1.5"/>
<path d="M423,894.3 L424.3,897.1 L427.3,897.3 L425,899.3 L425.7,902.3 L423,900.7 L420.3,902.3 L421,899.3 L418.7,897.3 L421.7,897.1 Z" fill="#e0e0e0"/>
<text x="436.5" y="904.2" font-size="13" fill="#e0e0e0" textLength="17.1" lengthAdjust="spacingAndGlyphs" stroke="#e0e0e0" stroke-width="0.3">2/5</text>
<rect x="518" y="882" width="502.5" height="32.4" rx="3" fill="#282828"/>
<path d="M525,882 L521,882 Q518,882 518,885 L518,911.4 Q518,914.4 521,914.4 L525,914.4 Z" fill="#f05454"/>
<text x="537.7" y="902.4" font-size="11.5" fill="#e8e8e8" textLength="87.0" lengthAdjust="spacingAndGlyphs" font-weight="bold">An important Error!</text>
<line x1="854.6" y1="885" x2="854.6" y2="911" stroke="#1c1c1c" stroke-width="1"/>
<line x1="947.5" y1="885" x2="947.5" y2="911" stroke="#1c1c1c" stroke-width="1"/>
<line x1="980.0" y1="885" x2="980.0" y2="911" stroke="#1c1c1c" stroke-width="1"/>
<text x="864.6" y="902.0" font-size="11" fill="#d0d0d0" textLength="73.0" lengthAdjust="spacingAndGlyphs" stroke="#d0d0d0" stroke-width="0.3">26/07/2023 - 20:22</text>
<path d="M959,902 L959,897.5 C959,894.5 960.8,892.8 963,892.8 C965.2,892.8 967,894.5 967,897.5 L967,902 L968.5,903 L957.5,903 Z M962,904 L964,904 L963,905.5 Z" fill="#d8d8d8"/>
<line x1="957" y1="892.5" x2="969" y2="904.5" stroke="#282828" stroke-width="2.2"/><line x1="957.5" y1="892.5" x2="968.5" y2="904" stroke="#d8d8d8" stroke-width="1"/>
<circle cx="995.5" cy="898.7" r="4.3" fill="none" stroke="#d8d8d8" stroke-width="1.3"/><circle cx="995.5" cy="898.7" r="1.6" fill="none" stroke="#d8d8d8" stroke-width="1.2"/>
<rect x="1020.5" y="882" width="68.3" height="32.4" rx="3" fill="#141618"/>
<text x="1043.2" y="903.2" font-size="12" fill="#e8e8e8" textLength="19.2" lengthAdjust="spacingAndGlyphs" font-weight="bold">(+4)</text>
<circle cx="1061" cy="893.2" r="3.2" fill="#3dbd7d"/>
<path d="M1067.5,901 L1072,896.5 L1076.5,901" fill="none" stroke="#e0e0e0" stroke-width="1.5"/>
<text x="1152.0" y="904.5" font-size="14" fill="#ececec" textLength="40.0" lengthAdjust="spacingAndGlyphs" font-weight="bold">41°18'</text>
</svg>
<div style="position:absolute;left:1182px;top:521px;width:685px;height:450px;background:#0b0d0f;border:1px solid #55585c;border-radius:3px 5px 0 0;overflow:hidden"><div style="position:absolute;left:0;top:0;width:683px;height:20px;background:#161616"></div><div style="position:absolute;left:0;top:20px;width:150px;height:390px;background:#111111"></div><div style="position:absolute;left:0;top:409px;width:683px;height:40px;background:#1b1b1b"></div></div>
<svg width="1920" height="960" viewBox="0 0 1920 960" style="position:absolute;left:0;top:0" font-family="Liberation Sans">
<text x="1190.8" y="535.2" font-size="9" fill="#f0f0f0" textLength="21.2" lengthAdjust="spacingAndGlyphs" font-weight="bold">LABEL</text>
<path d="M1809.8,535 L1817,527.8 M1809.8,535 L1809.8,532 M1809.8,535 L1812.8,535 M1817,527.8 L1814,527.8 M1817,527.8 L1817,530.8" fill="none" stroke="#d9d9d9" stroke-width="1.1"/>
<path d="M1826.8,527.3 L1826.8,535.7 M1822.6,531.5 L1831,531.5" fill="none" stroke="#d9d9d9" stroke-width="1.2"/>
<path d="M1826.8,527 L1828.5,529 L1825.1,529 Z M1826.8,536 L1828.5,534 L1825.1,534 Z M1822.3,531.5 L1824.3,529.8 L1824.3,533.2 Z M1831.3,531.5 L1829.3,529.8 L1829.3,533.2 Z" fill="#d9d9d9"/>
<path d="M1840.5,527.5 L1840.5,535.5 M1837,532 L1840.5,535.5 L1844,532" fill="none" stroke="#d9d9d9" stroke-width="1.2"/>
<path d="M1851,528 L1858,535 M1858,528 L1851,535" fill="none" stroke="#d9d9d9" stroke-width="1.3"/>
<rect x="1191.4" y="549.7" width="105.6" height="15" rx="2" fill="#1c1c1c"/>
<circle cx="1197.6" cy="556.3" r="2.2" fill="none" stroke="#c8c8c8" stroke-width="1"/><line x1="1199.2" y1="557.9" x2="1201" y2="559.7" stroke="#c8c8c8" stroke-width="1.1"/>
<text x="1206.4" y="559.2" font-size="7" fill="#bdbdbd" textLength="22.2" lengthAdjust="spacingAndGlyphs" stroke="#bdbdbd" stroke-width="0.3">Search...</text>
<rect x="1301" y="549.7" width="22.4" height="15" rx="2" fill="#1c1c1c"/>
<path d="M1312.2,553.3 L1312.2,561.1 M1308.3,557.2 L1316.1,557.2" stroke="#d8d8d8" stroke-width="1.1"/>
<rect x="1191" y="572.8" width="132.4" height="16" rx="2" fill="#1c1c1c"/>
<circle cx="1198.5" cy="580.9" r="3.4" fill="none" stroke="#d0d0d0" stroke-width="1.1"/>
<text x="1210.3" y="583.8" font-size="7" fill="#cccccc" textLength="33.7" lengthAdjust="spacingAndGlyphs" stroke="#cccccc" stroke-width="0.3">Alternative 1</text>
<rect x="1339.8" y="549.7" width="519" height="18.9" rx="2" fill="#1a1a1a"/>
<text x="1345.5" y="562.8" font-size="8.5" fill="#ececec" textLength="40.0" lengthAdjust="spacingAndGlyphs" font-weight="bold">Alternative 1</text>
<line x1="1782.5" y1="552" x2="1782.5" y2="566.5" stroke="#2c2c2c" stroke-width="1"/>
<text x="1788.8" y="562.2" font-size="7.5" fill="#cfcfcf" textLength="44.4" lengthAdjust="spacingAndGlyphs" stroke="#cfcfcf" stroke-width="0.3">Make Operative</text>
<rect x="1838" y="555.8" width="16" height="7.6" rx="3.8" fill="#1b2a3a"/>
<circle cx="1843" cy="559.5" r="4.3" fill="#f0f0f0"/>
<rect x="1841.5" y="557.5" width="3" height="4" rx="0.6" fill="#1a1a1a"/>
<text x="1340.0" y="588.2" font-size="7" fill="#e6e6e6" textLength="12.5" lengthAdjust="spacingAndGlyphs" font-weight="bold">Files</text>
<path d="M1369.3,583 L1374.7,588.4 M1374.7,583 L1369.3,588.4" stroke="#e25555" stroke-width="1.2"/>
<text x="1340.0" y="599.8" font-size="8" fill="#f0f0f0" textLength="17.3" lengthAdjust="spacingAndGlyphs" font-weight="bold">FILE 1</text>
<path d="M1577.2,595.6 L1579.7,598.1 L1582.2,595.6" fill="none" stroke="#d8d8d8" stroke-width="1.1"/>
<line x1="1340" y1="606.5" x2="1586.5" y2="606.5" stroke="#6e6e6e" stroke-width="1.5"/>
<text x="1612.0" y="588.2" font-size="7" fill="#e6e6e6" textLength="25.8" lengthAdjust="spacingAndGlyphs" font-weight="bold">Objective</text>
<text x="1612.0" y="599.8" font-size="7.5" fill="#a8a8a8" textLength="18.7" lengthAdjust="spacingAndGlyphs" stroke="#a8a8a8" stroke-width="0.3">Enter...</text>
<text x="1842.8" y="600.5" font-size="7" fill="#a8a8a8" textLength="12.5" lengthAdjust="spacingAndGlyphs" stroke="#a8a8a8" stroke-width="0.3">0/52</text>
<line x1="1612" y1="606.5" x2="1858" y2="606.5" stroke="#6e6e6e" stroke-width="1.5"/>
<rect x="1340.5" y="618.6" width="518.3" height="279.1" rx="3" fill="#0b0d0f" stroke="#1d1f21" stroke-width="1"/>
<path d="M1340.5,637.8 L1340.5,621.6 Q1340.5,618.6 1343.5,618.6 L1855.8,618.6 Q1858.8,618.6 1858.8,621.6 L1858.8,637.8 Z" fill="#1a1a1a"/>
<path d="M1348.3,626.4 L1354.5,626.4 L1351.4,630.3 Z" fill="#4a9ae8"/>
<text x="1357.3" y="631.4" font-size="8" fill="#f0f0f0" textLength="18.7" lengthAdjust="spacingAndGlyphs" font-weight="bold">FILE 1</text>
<rect x="1683.8" y="643.6" width="167.7" height="19.1" fill="#4196e6"/>
<rect x="1347" y="643.9" width="504.3" height="18.6" rx="2" fill="none" stroke="#4a4d50" stroke-width="1.2"/>
<line x1="1515.5" y1="644" x2="1515.5" y2="662.5" stroke="#4a4d50" stroke-width="1.2"/>
<line x1="1683.8" y1="644" x2="1683.8" y2="662.5" stroke="#4a4d50" stroke-width="1.2"/>
<text x="1418.6" y="656.9" font-size="8" fill="#e6e6e6" textLength="24.7" lengthAdjust="spacingAndGlyphs" font-weight="bold">HEADER</text>
<text x="1587.2" y="656.9" font-size="8" fill="#e6e6e6" textLength="24.7" lengthAdjust="spacingAndGlyphs" font-weight="bold">HEADER</text>
<text x="1755.2" y="656.9" font-size="8" fill="#13263a" textLength="24.7" lengthAdjust="spacingAndGlyphs" font-weight="bold">HEADER</text>
<text x="1366.2" y="679.0" font-size="8" fill="#4a9ae8" textLength="15.6" lengthAdjust="spacingAndGlyphs" stroke="#4a9ae8" stroke-width="0.3">Label</text>
<text x="1421.7" y="679.0" font-size="8" fill="#d0d0d0" textLength="15.6" lengthAdjust="spacingAndGlyphs" stroke="#d0d0d0" stroke-width="0.3">Label</text>
<text x="1480.6" y="679.0" font-size="8" fill="#d0d0d0" textLength="15.6" lengthAdjust="spacingAndGlyphs" stroke="#d0d0d0" stroke-width="0.3">Label</text>
<text x="1545.5" y="679.0" font-size="8" fill="#d0d0d0" textLength="15.6" lengthAdjust="spacingAndGlyphs" stroke="#d0d0d0" stroke-width="0.3">Label</text>
<text x="1598.0" y="679.0" font-size="8" fill="#d0d0d0" textLength="15.6" lengthAdjust="spacingAndGlyphs" stroke="#d0d0d0" stroke-width="0.3">Label</text>
<line x1="1347" y1="684.5" x2="1851" y2="684.5" stroke="#3a3d40" stroke-width="1"/>
<line x1="1347" y1="684.5" x2="1403" y2="684.5" stroke="#4196e6" stroke-width="1.8"/>
<path d="M1804.5,691 L1806.8,693.5 L1804.5,696 M1807.5,691 L1809.8,693.5 L1807.5,696" fill="none" stroke="#d8d8d8" stroke-width="0.9"/>
<text x="1813.0" y="697.1" font-size="7.5" fill="#e6e6e6" textLength="38.5" lengthAdjust="spacingAndGlyphs" font-weight="bold">Graphic View</text>
<text x="1347.5" y="717.0" font-size="7.5" fill="#e6e6e6" textLength="24.7" lengthAdjust="spacingAndGlyphs" font-weight="bold">All Items</text>
<rect x="1455.3" y="703.4" width="115.3" height="15.5" rx="2" fill="#1c1c1c"/>
<circle cx="1462.3" cy="710.6" r="2.2" fill="none" stroke="#c8c8c8" stroke-width="1"/><line x1="1463.9" y1="712.2" x2="1465.7" y2="714" stroke="#c8c8c8" stroke-width="1.1"/>
<text x="1470.6" y="714.2" font-size="7" fill="#bdbdbd" textLength="21.5" lengthAdjust="spacingAndGlyphs" stroke="#bdbdbd" stroke-width="0.3">Search...</text>
<text x="1628.0" y="717.0" font-size="7.5" fill="#e6e6e6" textLength="40.5" lengthAdjust="spacingAndGlyphs" font-weight="bold">Selected Items</text>
<rect x="1347.5" y="725.0" width="223.1" height="15.6" fill="#1c1c1c"/>
<rect x="1351.2" y="728.9" width="7.8" height="7.8" rx="2" fill="none" stroke="#b8b8b8" stroke-width="1.1"/>
<text x="1362.8" y="735.6" font-size="7" fill="#d0d0d0" textLength="25.5" lengthAdjust="spacingAndGlyphs" stroke="#d0d0d0" stroke-width="0.3">Select All</text>
<rect x="1347.5" y="741.6" width="223.1" height="15.6" fill="#1c1c1c"/>
<rect x="1351.2" y="745.5" width="7.8" height="7.8" rx="2" fill="none" stroke="#b8b8b8" stroke-width="1.1"/>
<text x="1362.8" y="752.2" font-size="7" fill="#d0d0d0" textLength="17.2" lengthAdjust="spacingAndGlyphs" stroke="#d0d0d0" stroke-width="0.3">Item 2</text>
<rect x="1347.5" y="758.1" width="223.1" height="15.6" fill="#1c1c1c"/>
<rect x="1351.2" y="762.0" width="7.8" height="7.8" rx="2" fill="none" stroke="#b8b8b8" stroke-width="1.1"/>
<text x="1362.8" y="768.7" font-size="7" fill="#d0d0d0" textLength="17.2" lengthAdjust="spacingAndGlyphs" stroke="#d0d0d0" stroke-width="0.3">Item 7</text>
<rect x="1347.5" y="774.7" width="223.1" height="15.6" fill="#1c1c1c"/>
<rect x="1351.2" y="778.6" width="7.8" height="7.8" rx="2" fill="none" stroke="#b8b8b8" stroke-width="1.1"/>
<text x="1362.8" y="785.3" font-size="7" fill="#d0d0d0" textLength="17.2" lengthAdjust="spacingAndGlyphs" stroke="#d0d0d0" stroke-width="0.3">Item 8</text>
<rect x="1347.5" y="791.2" width="223.1" height="15.6" fill="#1c1c1c"/>
<rect x="1351.2" y="795.1" width="7.8" height="7.8" rx="2" fill="none" stroke="#b8b8b8" stroke-width="1.1"/>
<text x="1362.8" y="801.8" font-size="7" fill="#d0d0d0" textLength="17.2" lengthAdjust="spacingAndGlyphs" stroke="#d0d0d0" stroke-width="0.3">Item 9</text>
<rect x="1347.5" y="807.8" width="223.1" height="15.6" fill="#1c1c1c"/>
<rect x="1351.2" y="811.7" width="7.8" height="7.8" rx="2" fill="none" stroke="#b8b8b8" stroke-width="1.1"/>
<text x="1362.8" y="818.4" font-size="7" fill="#d0d0d0" textLength="20.6" lengthAdjust="spacingAndGlyphs" stroke="#d0d0d0" stroke-width="0.3">Item 10</text>
<rect x="1347.5" y="824.4" width="223.1" height="15.6" fill="#1c1c1c"/>
<rect x="1351.2" y="828.3" width="7.8" height="7.8" rx="2" fill="none" stroke="#b8b8b8" stroke-width="1.1"/>
<text x="1362.8" y="835.0" font-size="7" fill="#d0d0d0" textLength="20.6" lengthAdjust="spacingAndGlyphs" stroke="#d0d0d0" stroke-width="0.3">Item 11</text>
<rect x="1347.5" y="840.9" width="223.1" height="15.6" fill="#1c1c1c"/>
<rect x="1351.2" y="844.8" width="7.8" height="7.8" rx="2" fill="none" stroke="#b8b8b8" stroke-width="1.1"/>
<text x="1362.8" y="851.5" font-size="7" fill="#d0d0d0" textLength="20.6" lengthAdjust="spacingAndGlyphs" stroke="#d0d0d0" stroke-width="0.3">Item 12</text>
<rect x="1347.5" y="857.5" width="223.1" height="15.6" fill="#1c1c1c"/>
<rect x="1351.2" y="861.4" width="7.8" height="7.8" rx="2" fill="none" stroke="#b8b8b8" stroke-width="1.1"/>
<text x="1362.8" y="868.1" font-size="7" fill="#d0d0d0" textLength="20.6" lengthAdjust="spacingAndGlyphs" stroke="#d0d0d0" stroke-width="0.3">Item 13</text>
<rect x="1347.5" y="874.0" width="223.1" height="15.6" fill="#1c1c1c"/>
<rect x="1351.2" y="877.9" width="7.8" height="7.8" rx="2" fill="none" stroke="#b8b8b8" stroke-width="1.1"/>
<text x="1362.8" y="884.6" font-size="7" fill="#d0d0d0" textLength="20.6" lengthAdjust="spacingAndGlyphs" stroke="#d0d0d0" stroke-width="0.3">Item 14</text>
<rect x="1573" y="725" width="3.7" height="165" rx="1" fill="#1c1c1c"/>
<circle cx="1599" cy="760.4" r="12.7" fill="#1c1c1c"/>
<circle cx="1599" cy="791.7" r="12.7" fill="#1c1c1c"/>
<circle cx="1599" cy="823.4" r="12.7" fill="#1c1c1c"/>
<circle cx="1599" cy="854.5" r="12.7" fill="#1c1c1c"/>
<path d="M1594.5,755.2 L1598.5,760.4 L1594.5,765.6 M1599.5,755.2 L1603.5,760.4 L1599.5,765.6" fill="none" stroke="#4a9ae8" stroke-width="1.5"/>
<path d="M1597.2,786.5 L1601.2,791.7 L1597.2,796.9" fill="none" stroke="#707478" stroke-width="1.4"/>
<path d="M1600.8,818.2 L1596.8,823.4 L1600.8,828.6" fill="none" stroke="#707478" stroke-width="1.4"/>
<path d="M1598.5,849.3 L1594.5,854.5 L1598.5,859.7 M1603.5,849.3 L1599.5,854.5 L1603.5,859.7" fill="none" stroke="#707478" stroke-width="1.4"/>
<circle cx="1752.8" cy="801" r="5.9" fill="#e6e6e6"/>
<rect x="1752.1" y="800" width="1.4" height="3.8" fill="#111"/><circle cx="1752.8" cy="798.3" r="0.8" fill="#111"/>
<text x="1726.9" y="820.3" font-size="7" fill="#d0d0d0" textLength="50.6" lengthAdjust="spacingAndGlyphs" stroke="#d0d0d0" stroke-width="0.3">No items selected.</text>
<text x="1705.4" y="952.5" font-size="8" fill="#d8d8d8" textLength="21.2" lengthAdjust="spacingAndGlyphs" stroke="#d8d8d8" stroke-width="0.3">Cancel</text>
<rect x="1739" y="940" width="40.2" height="22" rx="3" fill="#161616" stroke="#d0d0d0" stroke-width="1.2"/>
<text x="1750.1" y="952.8" font-size="8" fill="#e8e8e8" textLength="17.8" lengthAdjust="spacingAndGlyphs" stroke="#e8e8e8" stroke-width="0.3">Apply</text>
<rect x="1787.5" y="939.5" width="71.5" height="24" rx="3" fill="#4196e6"/>
<text x="1799.5" y="953.0" font-size="8" fill="#0f2236" textLength="47.4" lengthAdjust="spacingAndGlyphs" font-weight="bold">Save and Close</text>
</svg>
</body></html>
